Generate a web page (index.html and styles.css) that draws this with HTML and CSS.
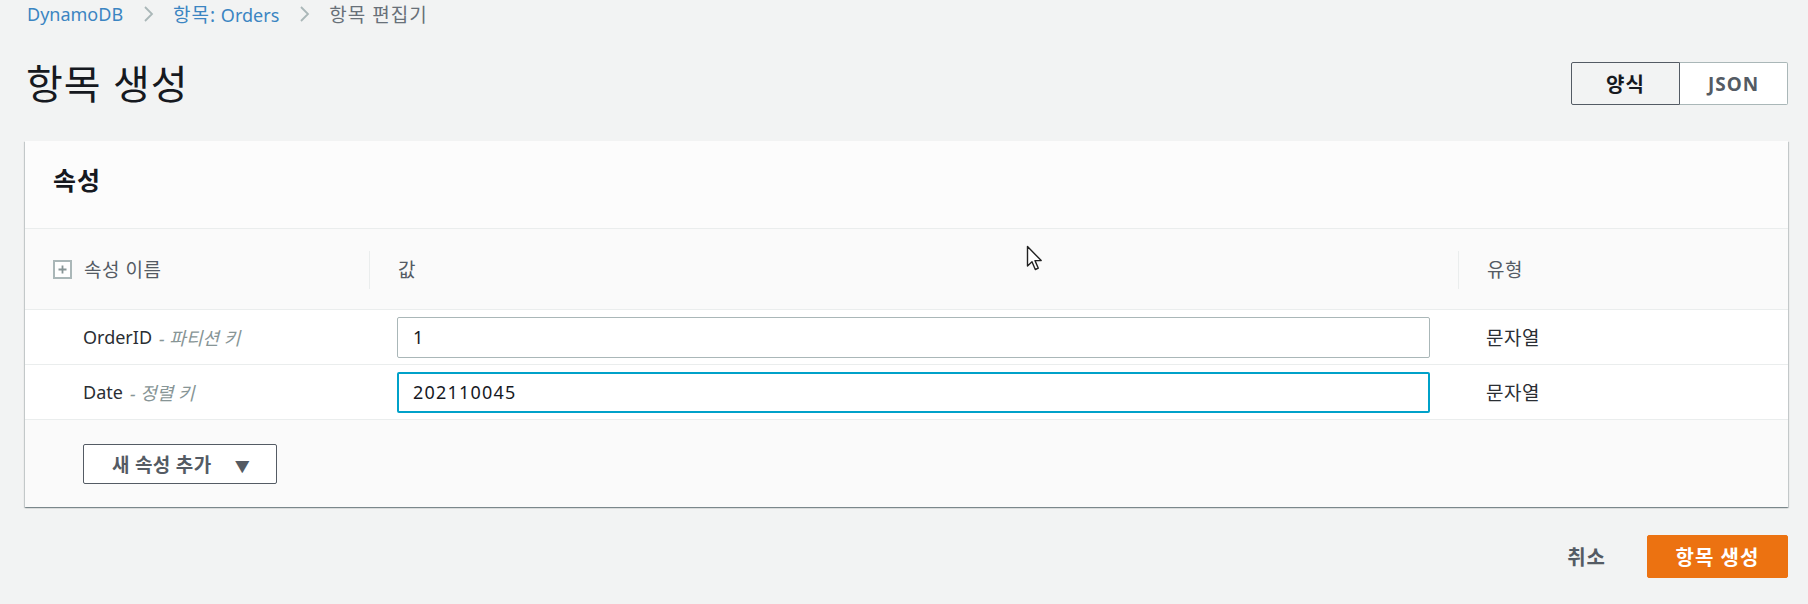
FILE: index.html
```html
<!DOCTYPE html>
<html lang="ko">
<head>
<meta charset="utf-8">
<title>항목 생성</title>
<link rel="stylesheet" href="styles.css">
</head>
<body>
<div class="page">
  <nav class="breadcrumb">
    <a class="crumb-link">DynamoDB</a>
    <svg class="chev" width="12" height="18" viewBox="0 0 12 18"><path d="M3 2 L10 9 L3 16" fill="none" stroke="#aab7b8" stroke-width="1.8"/></svg>
    <a class="crumb-link"><span class="ko">항목:</span> Orders</a>
    <svg class="chev" width="12" height="18" viewBox="0 0 12 18"><path d="M3 2 L10 9 L3 16" fill="none" stroke="#aab7b8" stroke-width="1.8"/></svg>
    <span class="crumb-current ko">항목 편집기</span>
  </nav>

  <header class="page-header">
    <h1 class="title">항목 생성</h1>
    <div class="toggle">
      <button class="toggle-btn active">양식</button>
      <button class="toggle-btn">JSON</button>
    </div>
  </header>

  <section class="card">
    <div class="card-header">속성</div>
    <div class="grid thead">
      <div class="cell c1">
        <svg class="plus" width="19" height="19" viewBox="0 0 19 19"><rect x="1" y="1" width="17" height="17" fill="#fff" stroke="#aab7b8" stroke-width="2"/><path d="M9.5 5.5 V13.5 M5.5 9.5 H13.5" stroke="#879596" stroke-width="1.8"/></svg>
        <span class="ko-label">속성 이름</span>
      </div>
      <div class="cell c2 sep"><span class="ko-label">값</span></div>
      <div class="cell c3 sep"><span class="ko-label">유형</span></div>
    </div>
    <div class="grid row">
      <div class="cell r1">OrderID <em class="key">- 파티션 키</em></div>
      <div class="cell r2"><input class="input" type="text" value="1"></div>
      <div class="cell r3"><span class="ko-label">문자열</span></div>
    </div>
    <div class="grid row">
      <div class="cell r1">Date <em class="key">- 정렬 키</em></div>
      <div class="cell r2"><input class="input focus" type="text" value="202110045"></div>
      <div class="cell r3"><span class="ko-label">문자열</span></div>
    </div>
    <div class="card-footer">
      <button class="add-btn">새 속성 추가 <span class="caret">▼</span></button>
    </div>
  </section>

  <div class="actions">
    <button class="cancel">취소</button>
    <button class="primary">항목 생성</button>
  </div>

  <svg class="cursor" width="19" height="27" viewBox="0 0 19 27"><path d="M1.5 1.5 L1.5 21 L6 16.8 L9.3 24.5 L12.3 23.2 L9 15.6 L15.2 15.6 Z" fill="#fff" stroke="#222" stroke-width="1.4" stroke-linejoin="round"/></svg>
</div>
</body>
</html>
```

FILE: styles.css
```css
* { box-sizing: border-box; }
html, body {
  margin: 0;
  padding: 0;
  background: #f2f3f3;
}
body {
  font-family: "Noto Sans", "Noto Sans CJK KR", sans-serif;
  color: #16191f;
}
.page {
  position: relative;
  width: 1808px;
  height: 604px;
  padding: 0 20px 0 25px;
}
.breadcrumb {
  height: 28px;
  display: flex;
  align-items: center;
  gap: 19px;
  font-size: 18px;
  padding-left: 2px;
}
.ko {
  font-size: 19px;
  letter-spacing: 1px;
}
.crumb-link { color: #3b85c2; }
.crumb-current { color: #687078; }
.chev { display: block; }

.page-header {
  margin-top: 34px;
  height: 43px;
  display: flex;
  align-items: center;
  justify-content: space-between;
}
.title {
  margin: 0;
  font-size: 40px;
  font-weight: 400;
  letter-spacing: 1px;
  line-height: 43px;
  padding-left: 1px;
  color: #16191f;
}
.toggle { display: flex; }
.toggle-btn {
  height: 43px;
  width: 108px;
  font-family: "Noto Sans", "Noto Sans CJK KR", sans-serif;
  font-size: 19px;
  font-weight: 700;
  letter-spacing: 1px;
  color: #545b64;
  background: #fff;
  border: 1px solid #aab7b8;
  border-left: none;
  border-radius: 0 2px 2px 0;
  padding: 0;
}
.toggle-btn.active {
  width: 109px;
  background: #f2f3f3;
  border: 1px solid #545b64;
  border-radius: 2px 0 0 2px;
  color: #16191f;
  font-size: 20px;
}

.card {
  margin-top: 36px;
  background: #fff;
  box-shadow: 0 1px 1px 0 rgba(0,28,36,.3), 1px 1px 1px 0 rgba(0,28,36,.15), -1px 1px 1px 0 rgba(0,28,36,.15);
}
.card-header {
  height: 88px;
  display: flex;
  align-items: center;
  padding: 0 0 12px 28px;
  font-size: 25px;
  font-weight: 700;
  letter-spacing: 1px;
  background: #fcfcfc;
  border-bottom: 1px solid #eaeded;
}
.grid {
  display: grid;
  grid-template-columns: 344px 1089px 1fr;
}
.thead {
  height: 81px;
  background: #fafafa;
  border-bottom: 1px solid #eaeded;
  color: #545b64;
}
.ko-label {
  font-size: 19px;
  letter-spacing: 0.5px;
}
.cell {
  display: flex;
  align-items: center;
}
.c1 { padding-left: 28px; gap: 12px; }
.c1 .plus { display: block; }
.c2, .c3 { padding-left: 29px; }
.sep { position: relative; }
.sep::before {
  content: "";
  position: absolute;
  left: 0;
  top: 22px;
  bottom: 20px;
  border-left: 1px solid #eaeded;
}
.row {
  height: 55px;
  border-bottom: 1px solid #eaeded;
  font-size: 18px;
  color: #16191f;
}
.r1 { padding-left: 58px; gap: 7px; color: #2a2e33; }
.key {
  font-style: italic;
  color: #879596;
  font-size: 18px;
}
.r2 { padding: 0 28px; }
.r3 { padding-left: 28px; color: #2a2e33; }
.input {
  width: 100%;
  height: 41px;
  border: 1px solid #aab7b8;
  border-radius: 2px;
  background: #fff;
  padding: 0 15px;
  font-family: "Noto Sans", "Noto Sans CJK KR", sans-serif;
  font-size: 18px;
  letter-spacing: 1.2px;
  color: #16191f;
  outline: none;
}
.input.focus {
  border: 2px solid #00a1c9;
  padding: 0 14px;
}
.card-footer {
  height: 87px;
  background: #fafafa;
  padding: 24px 0 0 58px;
}
.add-btn {
  height: 40px;
  width: 194px;
  border: 1px solid #545b64;
  border-radius: 2px;
  background: #fff;
  font-family: "Noto Sans", "Noto Sans CJK KR", sans-serif;
  font-size: 19px;
  font-weight: 700;
  letter-spacing: 0.3px;
  color: #545b64;
  padding: 0 0 0 2px;
}
.caret {
  font-size: 15px;
  margin-left: 18px;
  color: #545b64;
}

.actions {
  margin-top: 28px;
  display: flex;
  justify-content: flex-end;
  align-items: center;
  gap: 41px;
}
.cancel {
  background: none;
  border: none;
  padding: 0;
  font-family: "Noto Sans", "Noto Sans CJK KR", sans-serif;
  font-size: 20px;
  font-weight: 700;
  letter-spacing: 1px;
  color: #545b64;
}
.primary {
  height: 43px;
  width: 141px;
  background: #ec7211;
  border: 1px solid #ec7211;
  border-radius: 2px;
  color: #fff;
  font-family: "Noto Sans", "Noto Sans CJK KR", sans-serif;
  font-size: 20px;
  font-weight: 700;
  letter-spacing: 1px;
  padding: 0;
}
.cursor {
  position: absolute;
  left: 1026px;
  top: 245px;
}
```
